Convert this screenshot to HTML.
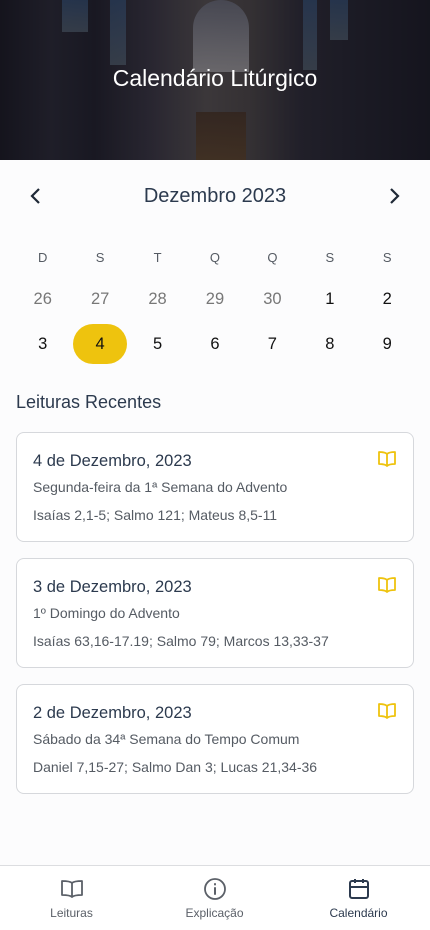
<!DOCTYPE html>
<html><head><meta charset="utf-8"><style>
*{box-sizing:border-box;margin:0;padding:0}
body{width:430px;height:930px;background:#fcfcfd;font-family:"Liberation Sans",sans-serif;position:relative;overflow:hidden;color:#1f2d3d}
.hero{position:absolute;left:0;top:0;width:430px;height:160px;overflow:hidden;
background:linear-gradient(90deg,#1c1b22 0%,#2b2a34 12%,#22212a 22%,#3a3640 35%,#57514f 48%,#4d4745 58%,#2e2c35 70%,#26252e 82%,#1d1c24 100%)}
.hero .win{position:absolute;left:193px;top:0;width:56px;height:72px;background:linear-gradient(#6c6e7a,#a9a6a6);border-radius:28px 28px 0 0;opacity:.85}
.hero .w{position:absolute;background:linear-gradient(#3b5b82,#5d6d7a);opacity:.7}
.hero .alt{position:absolute;left:196px;top:112px;width:50px;height:48px;background:linear-gradient(#4a3525,#5e4428);opacity:.9}
.hero h1{position:absolute;top:65px;width:100%;text-align:center;color:#fff;font-weight:normal;font-size:23px}
.mh{position:absolute;top:185px;width:100%;text-align:center;font-size:20px;color:#2c3a4e}
.chev{position:absolute;top:187px}
.grid{position:absolute;left:14px;width:402px;display:flex}
.grid div{width:57.43px;text-align:center}
.sel{display:inline-block;width:54px;height:40px;line-height:40px;border-radius:20px;background:#eec30e}
h2{position:absolute;left:16px;top:392px;font-size:18px;font-weight:normal;color:#2c3a4e}
.card{position:absolute;left:16px;width:398px;height:110px;background:#fff;border:1px solid #d6d8dc;border-radius:8px}
.card .t{position:absolute;left:16px;top:19px;font-size:16.5px;color:#2c3a4e}
.card .s{position:absolute;left:16px;top:46px;font-size:14px;color:#555b63}
.card .r{position:absolute;left:16px;top:74px;font-size:14px;color:#555b63}
.card svg{position:absolute;right:16px;top:17px}
.nav{position:absolute;top:865px;left:0;width:430px;height:65px;border-top:1px solid #dcdde0;background:#fff}
.it{position:absolute;top:0;width:143px;text-align:center}
.it svg{position:absolute;top:11px;left:60px}
.it span{position:absolute;top:40px;left:0;width:100%;font-size:12px;color:#5b6068}
</style></head><body>
<div class="hero">
<div class="w" style="left:62px;top:0;width:26px;height:32px"></div>
<div class="w" style="left:110px;top:0;width:16px;height:65px"></div>
<div class="w" style="left:303px;top:0;width:14px;height:70px"></div>
<div class="w" style="left:330px;top:0;width:18px;height:40px"></div>
<div class="win"></div><div class="alt"></div>
<div style="position:absolute;inset:0;background:rgba(10,10,20,.35)"></div>
<h1>Calendário Litúrgico</h1>
</div>
<svg class="chev" style="left:28px" width="16" height="18" viewBox="0 0 16 18"><path d="M11 2 4 9l7 7" fill="none" stroke="#1f2937" stroke-width="2.2"/></svg>
<div class="mh">Dezembro 2023</div>
<svg class="chev" style="left:386px" width="16" height="18" viewBox="0 0 16 18"><path d="M5 2l7 7-7 7" fill="none" stroke="#1f2937" stroke-width="2.2"/></svg>
<div class="grid" style="top:250px;font-size:13px;color:#555b63"><div>D</div><div>S</div><div>T</div><div>Q</div><div>Q</div><div>S</div><div>S</div></div>
<div class="grid" style="top:290px;font-size:16.5px"><div style="color:#777">26</div><div style="color:#777">27</div><div style="color:#777">28</div><div style="color:#777">29</div><div style="color:#777">30</div><div style="color:#111">1</div><div style="color:#111">2</div></div>
<div class="grid" style="top:324px;font-size:16.5px;color:#111;line-height:40px"><div>3</div><div><span class="sel">4</span></div><div>5</div><div>6</div><div>7</div><div>8</div><div>9</div></div>
<h2>Leituras Recentes</h2>
<div class="card" style="top:432px"><div class="t">4 de Dezembro, 2023</div><div class="s">Segunda-feira da 1ª Semana do Advento</div><div class="r">Isaías 2,1-5; Salmo 121; Mateus 8,5-11</div><svg width="20" height="18" viewBox="0 0 20 18"><path d="M10 4C8 2 4 2 2 2v12c2 0 6 0 8 2 2-2 6-2 8-2V2c-2 0-6 0-8 2zm0 0v12" fill="none" stroke="#eec30e" stroke-width="1.8" stroke-linejoin="round"/></svg></div>
<div class="card" style="top:558px"><div class="t">3 de Dezembro, 2023</div><div class="s">1º Domingo do Advento</div><div class="r">Isaías 63,16-17.19; Salmo 79; Marcos 13,33-37</div><svg width="20" height="18" viewBox="0 0 20 18"><path d="M10 4C8 2 4 2 2 2v12c2 0 6 0 8 2 2-2 6-2 8-2V2c-2 0-6 0-8 2zm0 0v12" fill="none" stroke="#eec30e" stroke-width="1.8" stroke-linejoin="round"/></svg></div>
<div class="card" style="top:684px"><div class="t">2 de Dezembro, 2023</div><div class="s">Sábado da 34ª Semana do Tempo Comum</div><div class="r">Daniel 7,15-27; Salmo Dan 3; Lucas 21,34-36</div><svg width="20" height="18" viewBox="0 0 20 18"><path d="M10 4C8 2 4 2 2 2v12c2 0 6 0 8 2 2-2 6-2 8-2V2c-2 0-6 0-8 2zm0 0v12" fill="none" stroke="#eec30e" stroke-width="1.8" stroke-linejoin="round"/></svg></div>
<div class="nav">
<div class="it" style="left:0"><svg width="24" height="24" viewBox="0 0 24 24"><path d="M12 6C10 4 5 4 2 4v14c3 0 8 0 10 2 2-2 7-2 10-2V4c-3 0-8 0-10 2zm0 0v14" fill="none" stroke="#5b6068" stroke-width="1.8" stroke-linejoin="round"/></svg><span>Leituras</span></div>
<div class="it" style="left:143px"><svg width="24" height="24" viewBox="0 0 24 24"><circle cx="12" cy="12" r="10" fill="none" stroke="#5b6068" stroke-width="1.8"/><path d="M12 11v6M12 7v.5" stroke="#5b6068" stroke-width="2" stroke-linecap="round"/></svg><span>Explicação</span></div>
<div class="it" style="left:287px"><svg width="24" height="24" viewBox="0 0 24 24"><rect x="3" y="4" width="18" height="17" rx="2" fill="none" stroke="#2c3a4e" stroke-width="2"/><path d="M3 10h18M8 2v4M16 2v4" stroke="#2c3a4e" stroke-width="2"/></svg><span style="color:#2c3a4e">Calendário</span></div>
</div>
</body></html>
